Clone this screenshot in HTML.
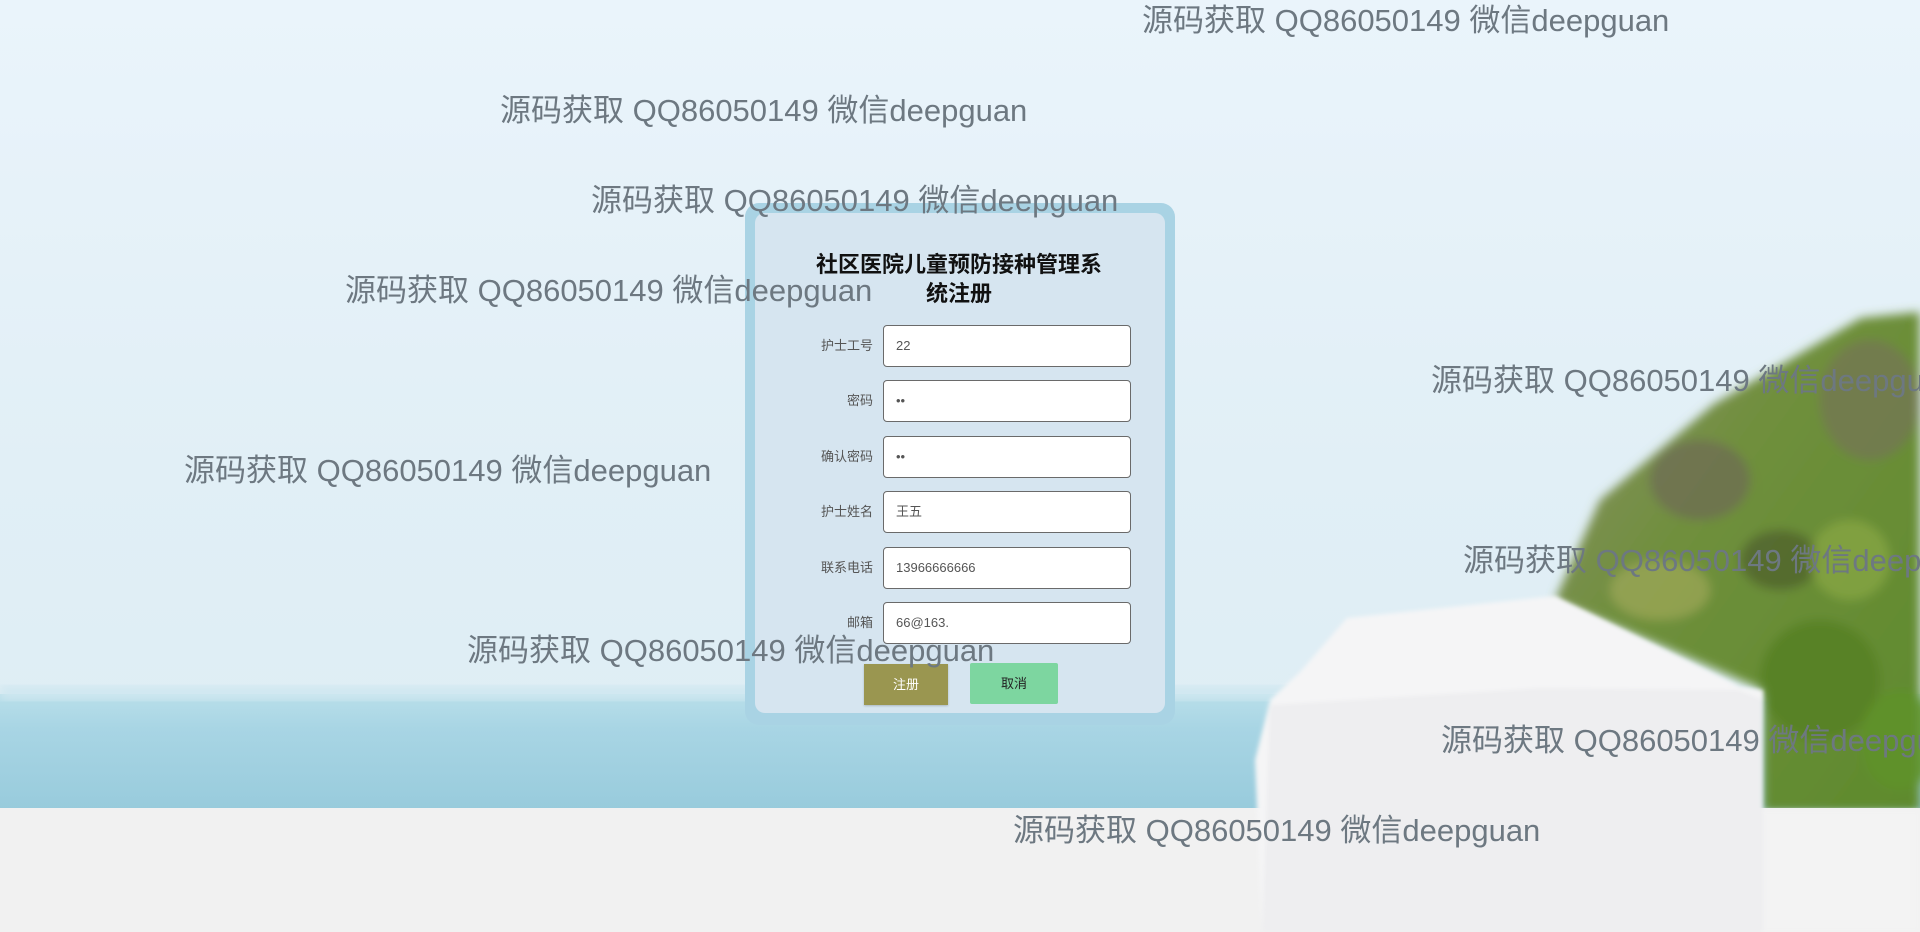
<!DOCTYPE html>
<html><head><meta charset="utf-8">
<style>
html,body{margin:0;padding:0;width:1920px;height:932px;overflow:hidden;font-family:"Liberation Sans","Noto Sans CJK SC",sans-serif;}
.bg{position:absolute;left:0;top:0;width:1920px;height:932px;}
.panel{position:absolute;left:745px;top:203px;width:430px;height:522px;background:#a9d3e4;border-radius:14px;}
.inner{position:absolute;left:10px;top:10px;width:410px;height:500px;background:#d6e5f0;border-radius:10px;}
.title{position:absolute;left:24px;top:37px;width:360px;text-align:center;font-weight:bold;font-size:22px;line-height:29px;color:#111;white-space:nowrap;}
.row{position:absolute;left:0;width:410px;height:42px;}
.row label{position:absolute;right:292px;top:0;line-height:42px;font-size:13px;color:#555;}
.row .in{position:absolute;left:128px;top:0;border:1px solid #6a6a6a;border-radius:4px;background:#fff;font-size:13px;color:#555;line-height:40px;padding-left:12px;box-sizing:border-box;width:248px;height:42px;}
.btn{position:absolute;height:41px;font-size:13px;text-align:center;line-height:41px;}
.wm{position:absolute;font-family:"Liberation Sans","Noto Sans CJK SC",sans-serif;font-size:31px;color:#6d7881;white-space:nowrap;line-height:34px;z-index:5;}
</style></head><body>
<svg class="bg" viewBox="0 0 1920 932" xmlns="http://www.w3.org/2000/svg">
<defs>
<linearGradient id="sky" x1="0" y1="0" x2="0" y2="1">
<stop offset="0" stop-color="#eaf4fb"/><stop offset="0.5" stop-color="#e1eff6"/><stop offset="1" stop-color="#dcecf3"/>
</linearGradient>
<linearGradient id="sea" x1="0" y1="0" x2="0" y2="1">
<stop offset="0" stop-color="#b9dfea"/><stop offset="0.3" stop-color="#a8d5e4"/><stop offset="1" stop-color="#98cbdc"/>
</linearGradient>
<linearGradient id="hill" x1="0" y1="0" x2="1" y2="1">
<stop offset="0" stop-color="#8c8f6c"/><stop offset="0.4" stop-color="#6f8f3c"/><stop offset="1" stop-color="#5e8a2c"/>
</linearGradient>
<filter id="b4"><feGaussianBlur stdDeviation="5"/></filter>
<filter id="b2"><feGaussianBlur stdDeviation="2"/></filter>
</defs>
<rect width="1920" height="932" fill="url(#sky)"/>
<rect x="0" y="694" width="1920" height="116" fill="url(#sea)"/>
<rect x="0" y="686" width="1920" height="14" fill="#cfe7f0" filter="url(#b4)"/>
<g filter="url(#b4)">
<polygon points="1555,600 1600,500 1714,404 1861,318 1920,312 1920,812 1763,812 1763,690" fill="url(#hill)"/>
<ellipse cx="1700" cy="480" rx="50" ry="40" fill="#6e6a55" opacity=".7"/>
<ellipse cx="1870" cy="400" rx="50" ry="60" fill="#76705c" opacity=".6"/>
<ellipse cx="1780" cy="560" rx="40" ry="30" fill="#4d5e2c" opacity=".7"/>
<ellipse cx="1850" cy="560" rx="40" ry="40" fill="#8aa845" opacity=".7"/>
<ellipse cx="1820" cy="680" rx="60" ry="60" fill="#557f25" opacity=".8"/>
<ellipse cx="1660" cy="590" rx="50" ry="30" fill="#a0a85a" opacity=".7"/>
<ellipse cx="1900" cy="740" rx="40" ry="50" fill="#5f9228" opacity=".8"/>
</g>
<rect x="0" y="808" width="1920" height="124" fill="#f1f1f1"/>
<g filter="url(#b2)">
<path d="M1262,932 L1255,760 L1270,700 L1300,672 L1347,618 L1555,596 L1739,686 L1763,690 L1763,932 Z" fill="#f5f5f6"/>
<path d="M1270,705 L1540,688 L1739,690 L1763,700 L1763,932 L1262,932 Z" fill="#eeeef0"/>
<rect x="1763" y="810" width="157" height="122" fill="#f3f3f3"/>
</g>
</svg>

<div class="panel"><div class="inner">
<div class="title">社区医院儿童预防接种管理系<br>统注册</div>
<div class="row" style="top:112px"><label>护士工号</label><div class="in">22</div></div>
<div class="row" style="top:167px"><label>密码</label><div class="in">••</div></div>
<div class="row" style="top:223px"><label>确认密码</label><div class="in">••</div></div>
<div class="row" style="top:278px"><label>护士姓名</label><div class="in">王五</div></div>
<div class="row" style="top:334px"><label>联系电话</label><div class="in">13966666666</div></div>
<div class="row" style="top:389px"><label>邮箱</label><div class="in">66@163.</div></div>
<div class="btn" style="left:109px;top:451px;width:84px;background:#9a9650;color:#fff;box-shadow:0 1px 2px rgba(0,0,0,.2)">注册</div>
<div class="btn" style="left:215px;top:450px;width:88px;background:#7dd6a0;color:#222;border-radius:2px">取消</div>
</div></div>

<div class="wm" style="left:1142px;top:4px">源码获取 QQ86050149 微信deepguan</div>
<div class="wm" style="left:500px;top:94px">源码获取 QQ86050149 微信deepguan</div>
<div class="wm" style="left:591px;top:184px">源码获取 QQ86050149 微信deepguan</div>
<div class="wm" style="left:345px;top:274px">源码获取 QQ86050149 微信deepguan</div>
<div class="wm" style="left:1431px;top:364px">源码获取 QQ86050149 微信deepguan</div>
<div class="wm" style="left:184px;top:454px">源码获取 QQ86050149 微信deepguan</div>
<div class="wm" style="left:1463px;top:544px">源码获取 QQ86050149 微信deepguan</div>
<div class="wm" style="left:467px;top:634px">源码获取 QQ86050149 微信deepguan</div>
<div class="wm" style="left:1441px;top:724px">源码获取 QQ86050149 微信deepguan</div>
<div class="wm" style="left:1013px;top:814px">源码获取 QQ86050149 微信deepguan</div>
</body></html>
